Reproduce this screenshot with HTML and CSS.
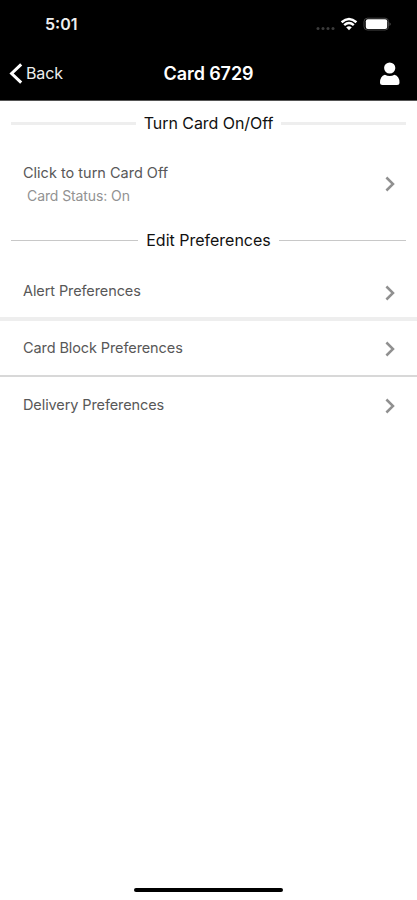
FILE: index.html
```html
<!DOCTYPE html>
<html lang="en">
<head>
<meta charset="utf-8">
<meta name="viewport" content="width=device-width, initial-scale=1">
<title>Card 6729</title>
<link rel="stylesheet" href="styles.css">
</head>
<body>
<div class="screen">
  <header class="header">
    <div class="status">
      <span class="time">5:01</span>
      <svg class="indicators" width="76" height="16" viewBox="0 0 76 16">
        <g fill="#3c3c3c"><circle cx="3" cy="12.4" r="1.5"/><circle cx="8" cy="12.4" r="1.5"/><circle cx="13" cy="12.4" r="1.5"/><circle cx="18" cy="12.4" r="1.5"/></g>
        <g fill="none" stroke="#fff" stroke-width="2.5"><path d="M26.6 6.200Q34 -.2 41.400 6.200"/><path d="M29.200 9.100Q34 5 38.800 9.100"/></g>
        <path d="M31.200 11.300Q34 9 36.800 11.300L34 14.300Z" fill="#fff"/>
        <rect x="49" y="2.200" width="24.500" height="11.800" rx="3.400" fill="#000" stroke="#444" stroke-width="1"/>
        <rect x="50.800" y="3.300" width="21.400" height="9.700" rx="2" fill="#fff"/>
        <path d="M74.700 6.200q1.600 1.800 0 3.700z" fill="#777"/>
      </svg>
    </div>
    <nav class="nav">
      <a class="back"><svg width="14" height="22" viewBox="0 0 14 22"><path d="M12.200 1.300 2.600 10.500l9.600 9.200" fill="none" stroke="#fff" stroke-width="3"/></svg><span class="back-label">Back</span></a>
      <h1 class="title">Card 6729</h1>
      <svg class="user" width="20" height="24" viewBox="0 0 20 24"><circle cx="9.700" cy="6" r="5.600" fill="#fff"/><path d="M4.900 12.700q4.800 2.500 9.600 0 5 1.300 5 7.900 0 2.500-2.500 2.500H2.500Q0 23.100 0 20.600q0-6.600 4.900-7.900z" fill="#fff"/></svg>
    </nav>
  </header>
  <main>
    <h2 class="section thick"><span class="heading">Turn Card On/Off</span></h2>
    <a class="row toggle">
      <span class="text"><span class="label">Click to turn Card Off</span><span class="sub">Card Status: On</span></span>
      <svg class="chevron" width="12" height="16" viewBox="0 0 12 16"><path d="M2.400 1.500 9 8 2.400 14.500"/></svg>
    </a>
    <h2 class="section"><span class="heading">Edit Preferences</span></h2>
    <a class="row alert"><span class="label">Alert Preferences</span>
      <svg class="chevron" width="12" height="16" viewBox="0 0 12 16"><path d="M2.400 1.500 9 8 2.400 14.500"/></svg></a>
    <a class="row block"><span class="label">Card Block Preferences</span>
      <svg class="chevron" width="12" height="16" viewBox="0 0 12 16"><path d="M2.400 1.500 9 8 2.400 14.500"/></svg></a>
    <a class="row delivery"><span class="label">Delivery Preferences</span>
      <svg class="chevron" width="12" height="16" viewBox="0 0 12 16"><path d="M2.400 1.500 9 8 2.400 14.500"/></svg></a>
  </main>
  <div class="home"></div>
</div>
</body>
</html>
```
FILE: styles.css
```css
* { box-sizing: border-box; }
body { margin: 0; background: #fff; font-family: Inter, "Liberation Sans", sans-serif; }
.screen { height: 900px; display: flex; flex-direction: column; overflow: hidden; }
main { flex: 1; }
svg { display: block; flex: none; }
h1, h2 { margin: 0; font-weight: 400; }
.header { height: 101px; background: #000; color: #fff; border-bottom: 1px solid #555; }
.status { height: 48px; padding: 0 26px 0 45px; display: flex; align-items: center; justify-content: space-between; }
.time { font-size: 16px; font-weight: 600; color: #eee; }
.nav { height: 51px; padding: 0 9px; display: grid; grid-template-columns: 1fr auto 1fr; align-items: center; }
.back { display: flex; align-items: center; gap: 3px; font-size: 16px; letter-spacing: -.1px; color: #eee; }
.back-label { margin-top: -1px; }
.title { font-size: 18px; font-weight: 600; letter-spacing: -.1px; }
.user { justify-self: end; margin-right: 8px; }
.section { height: 45px; padding: 0 11px; display: flex; align-items: center; gap: 8px; font-size: 16px; line-height: 20px; color: #111; }
.section::before, .section::after { content: ""; flex: 1; height: 1px; background: #c8c8c8; }
.thick::before, .thick::after { height: 3px; background: #eee; }
.heading { white-space: nowrap; margin-top: -2px; }
.thick .heading { letter-spacing: -.05px; }
.row { display: flex; align-items: center; justify-content: space-between; padding: 0 21px 0 23px; color: #585858; font-size: 14.5px; line-height: 20px; letter-spacing: -.1px; }
.toggle { height: 72px; padding-top: 4px; letter-spacing: 0; }
.text { display: flex; flex-direction: column; gap: 3px; }
.sub { padding-left: 4px; font-size: 14px; letter-spacing: -.1px; color: #929292; }
.alert { height: 58px; padding-top: 4px; border-bottom: 4px solid #eee; }
.alert .label { margin-top: -3px; }
.alert .chevron { margin-top: 2px; }
.block { height: 56px; border-bottom: 2px solid #d8d8d8; }
.block .chevron { margin-top: 2px; }
.delivery { height: 58px; }
.delivery .label { margin-top: -2px; }
.chevron path { fill: none; stroke: #909090; stroke-width: 2.5; }
.home { width: 149px; height: 4px; margin: 0 auto 8px; background: #000; border-radius: 2px; }
```
